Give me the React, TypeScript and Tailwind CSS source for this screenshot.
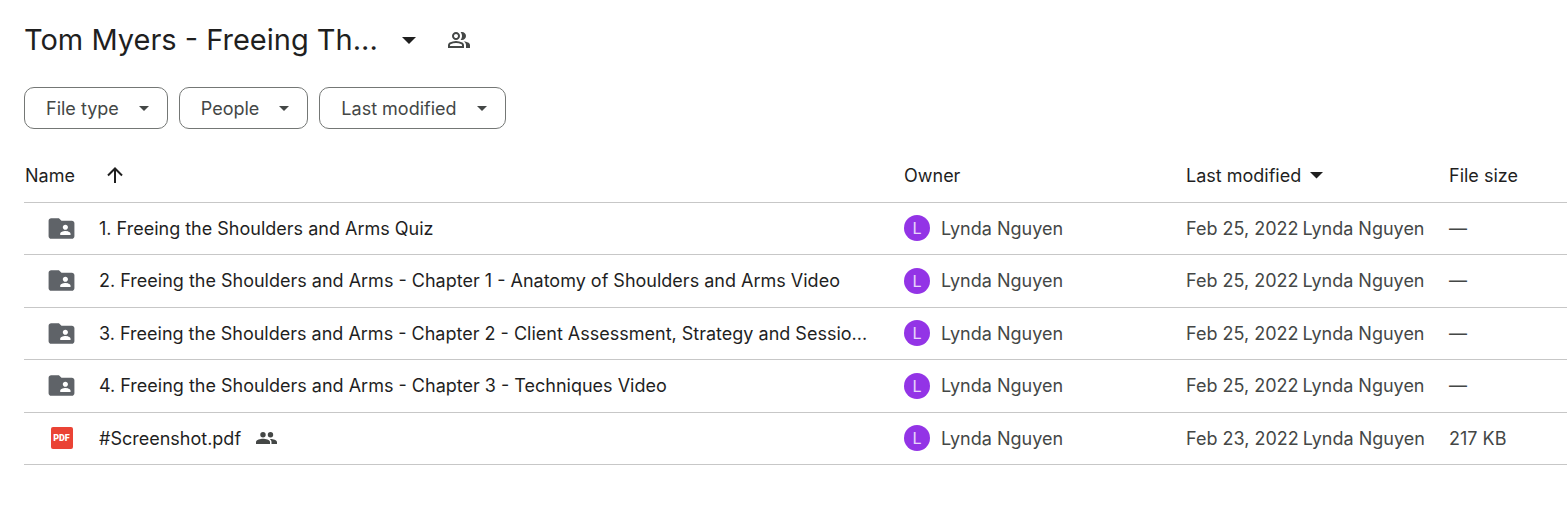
import React from 'react';

interface FileEntry {
  name: string;
  kind: 'folder' | 'pdf';
  owner: string;
  modified: string;
  size: string;
  shared?: boolean;
}

const FILES: FileEntry[] = [
  { name: '1. Freeing the Shoulders and Arms Quiz', kind: 'folder', owner: 'Lynda Nguyen', modified: 'Feb 25, 2022', size: '—' },
  { name: '2. Freeing the Shoulders and Arms - Chapter 1 - Anatomy of Shoulders and Arms Video', kind: 'folder', owner: 'Lynda Nguyen', modified: 'Feb 25, 2022', size: '—' },
  { name: '3. Freeing the Shoulders and Arms - Chapter 2 - Client Assessment, Strategy and Sessio...', kind: 'folder', owner: 'Lynda Nguyen', modified: 'Feb 25, 2022', size: '—' },
  { name: '4. Freeing the Shoulders and Arms - Chapter 3 - Techniques Video', kind: 'folder', owner: 'Lynda Nguyen', modified: 'Feb 25, 2022', size: '—' },
  { name: '#Screenshot.pdf', kind: 'pdf', owner: 'Lynda Nguyen', modified: 'Feb 23, 2022', size: '217 KB', shared: true },
];

const FILTERS = ['File type', 'People', 'Last modified'];

const Caret: React.FC<{ className: string }> = ({ className }) => (
  <svg viewBox="0 0 10 5" className={className} fill="currentColor" aria-hidden="true">
    <path d="M0 0h10L5 5z" />
  </svg>
);

const PeopleOutlineIcon: React.FC = () => (
  <svg viewBox="0 -960 960 960" className="size-6" fill="currentColor" aria-hidden="true">
    <path d="M40-160v-112q0-34 17.500-62.500T104-378q62-31 126-46.500T360-440q66 0 130 15.500T616-378q29 15 46.500 43.500T680-272v112H40Zm720 0v-120q0-44-24.500-84.500T666-434q51 6 96 20.500t84 35.500q36 20 55 44.500t19 53.500v120H760ZM360-480q-66 0-113-47t-47-113q0-66 47-113t113-47q66 0 113 47t47 113q0 66-47 113t-113 47Zm400-160q0 66-47 113t-113 47q-11 0-28-2.500t-28-5.500q27-32 41.500-71t14.500-81q0-42-14.500-81T544-792q14-5 28-6.500t28-1.500q66 0 113 47t47 113ZM120-240h480v-32q0-11-5.500-20T580-306q-54-27-109-40.500T360-360q-56 0-111 13.500T140-306q-9 5-14.500 14t-5.500 20v32Zm240-320q33 0 56.500-23.500T440-640q0-33-23.500-56.500T360-720q-33 0-56.500 23.500T280-640q0 33 23.500 56.500T360-560Z" />
  </svg>
);

const PeopleIcon: React.FC = () => (
  <svg viewBox="0 0 21 12" className="h-3 w-[21px] text-[#444746]" fill="currentColor" role="img" aria-label="Shared">
    <circle cx="7" cy="2.700" r="2.700" />
    <circle cx="14.500" cy="2.700" r="2.700" />
    <path d="M0 12v-2c0-2.300 4.500-3.300 7-3.300s7 1 7 3.300v2z" />
    <path d="M15.500 12v-2c0-1.300-.7-2.300-1.700-3.100C16.500 6.700 21 7.700 21 10v2z" />
  </svg>
);

const SharedFolderIcon: React.FC = () => (
  <svg viewBox="0 0 24 24" className="size-[31px]" fill="#5f6368" aria-hidden="true">
    <path d="M20 6h-8l-2-2H4c-1.100 0-1.990.9-1.990 2L2 18c0 1.100.9 2 2 2h16c1.100 0 2-.9 2-2V8c0-1.100-.9-2-2-2zm-5 3c1.100 0 2 .9 2 2s-.9 2-2 2-2-.9-2-2 .9-2 2-2zm4 8h-8v-1c0-1.330 2.670-2 4-2s4 .67 4 2v1z" />
  </svg>
);

const PdfIcon: React.FC = () => (
  <span className="flex size-[22px] items-center justify-center rounded-xs bg-[#ea4335] font-['Roboto',sans-serif] text-[9px] leading-none font-black text-white">
    PDF
  </span>
);

export default function App() {
  return (
    <main className="pt-5 pl-6 font-['Inter',sans-serif] text-[#1f1f1f]">
      <header className="flex h-10 items-center">
        <h1>
          <button type="button" className="flex items-center text-[29px] leading-10 whitespace-nowrap">
            Tom Myers - Freeing Th...
            <Caret className="ml-6 w-[14px]" />
          </button>
        </h1>
        <button type="button" aria-label="Manage access" className="ml-[31px] text-[#444746]">
          <PeopleOutlineIcon />
        </button>
      </header>

      <div className="mt-[27px] flex gap-[11px]">
        {FILTERS.map((label) => (
          <button
            key={label}
            type="button"
            className="flex h-[42px] items-center gap-5 rounded-[10px] border border-[#747775] pr-[18px] pl-[21px] text-[18px] text-[#444746]"
          >
            {label}
            <Caret className="w-[10px]" />
          </button>
        ))}
      </div>

      <table className="mt-5 w-full table-fixed text-left text-[18px] whitespace-nowrap">
        <thead>
          <tr className="h-[53px] border-b border-[#c7c7c7]">
            <th scope="col" className="pl-px font-normal">
              <div className="flex items-center gap-8">
                Name
                <button type="button" aria-label="Reverse sort direction">
                  <svg viewBox="0 0 16 16" className="size-4" fill="none" stroke="currentColor" strokeWidth="2" aria-hidden="true">
                    <path d="M8 16V1.500M1 8.500l7-7 7 7" />
                  </svg>
                </button>
              </div>
            </th>
            <th scope="col" className="w-[282px] font-normal">Owner</th>
            <th scope="col" className="w-[263px] font-normal">
              <button type="button" className="flex items-center gap-[9px]">
                Last modified
                <Caret className="w-[13px]" />
              </button>
            </th>
            <th scope="col" className="w-[118px] font-normal">File size</th>
          </tr>
        </thead>
        <tbody>
          {FILES.map((file) => (
            <tr key={file.name} className="h-[52px] border-b border-[#c7c7c7] even:h-[53px]">
              <td>
                <div className="flex items-center">
                  <span className="flex w-[75px] justify-center">
                    {file.kind === 'folder' ? <SharedFolderIcon /> : <PdfIcon />}
                  </span>
                  {file.name}
                  {file.shared && (
                    <span className="ml-[15px]">
                      <PeopleIcon />
                    </span>
                  )}
                </div>
              </td>
              <td className="text-[#444746]">
                <div className="flex items-center gap-[11px]">
                  <span className="flex size-[26px] items-center justify-center rounded-full bg-[#9334e6] text-base text-white/80">
                    {file.owner[0]}
                  </span>
                  {file.owner}
                </div>
              </td>
              <td className="text-[#444746]">
                <div className="flex gap-1">
                  <span>{file.modified}</span>
                  <span>{file.owner}</span>
                </div>
              </td>
              <td className="text-[#444746]">{file.size}</td>
            </tr>
          ))}
        </tbody>
      </table>
    </main>
  );
}
